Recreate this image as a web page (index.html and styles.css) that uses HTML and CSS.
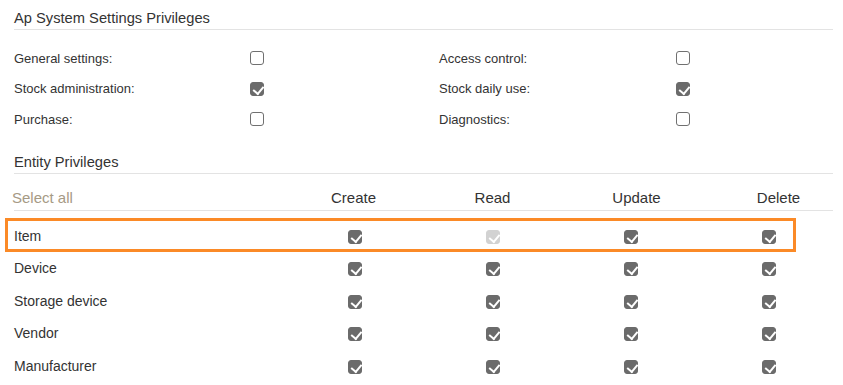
FILE: index.html
```html
<!DOCTYPE html>
<html lang="en">
<head>
    <meta charset="UTF-8">
    <meta name="viewport" content="width=device-width, initial-scale=1.0">
    <title>Privileges</title>
    <link rel="stylesheet" href="styles.css">
</head>
<body>
    <div class="container">
        <h2 class="section-title">Ap System Settings Privileges</h2>

        <div class="settings-grid">
            <span class="setting-label">General settings:</span>
            <span class="cb"></span>
            <span class="setting-label">Access control:</span>
            <span class="cb"></span>

            <span class="setting-label">Stock administration:</span>
            <span class="cb checked"></span>
            <span class="setting-label">Stock daily use:</span>
            <span class="cb checked"></span>

            <span class="setting-label">Purchase:</span>
            <span class="cb"></span>
            <span class="setting-label">Diagnostics:</span>
            <span class="cb"></span>
        </div>

        <h2 class="section-title entity-title">Entity Privileges</h2>

        <div class="entity-header">
            <span class="select-all">Select all</span>
            <span>Create</span>
            <span>Read</span>
            <span>Update</span>
            <span>Delete</span>
        </div>

        <div class="entity-rows">
            <div class="entity-row highlighted">
                <span class="entity-name">Item</span>
                <span class="cell"><span class="cb checked"></span></span>
                <span class="cell"><span class="cb checked disabled"></span></span>
                <span class="cell"><span class="cb checked"></span></span>
                <span class="cell"><span class="cb checked"></span></span>
            </div>
            <div class="entity-row">
                <span class="entity-name">Device</span>
                <span class="cell"><span class="cb checked"></span></span>
                <span class="cell"><span class="cb checked"></span></span>
                <span class="cell"><span class="cb checked"></span></span>
                <span class="cell"><span class="cb checked"></span></span>
            </div>
            <div class="entity-row">
                <span class="entity-name">Storage device</span>
                <span class="cell"><span class="cb checked"></span></span>
                <span class="cell"><span class="cb checked"></span></span>
                <span class="cell"><span class="cb checked"></span></span>
                <span class="cell"><span class="cb checked"></span></span>
            </div>
            <div class="entity-row">
                <span class="entity-name">Vendor</span>
                <span class="cell"><span class="cb checked"></span></span>
                <span class="cell"><span class="cb checked"></span></span>
                <span class="cell"><span class="cb checked"></span></span>
                <span class="cell"><span class="cb checked"></span></span>
            </div>
            <div class="entity-row">
                <span class="entity-name">Manufacturer</span>
                <span class="cell"><span class="cb checked"></span></span>
                <span class="cell"><span class="cb checked"></span></span>
                <span class="cell"><span class="cb checked"></span></span>
                <span class="cell"><span class="cb checked"></span></span>
            </div>
        </div>
    </div>
</body>
</html>
```

FILE: styles.css
```css
:root {
    --text-color: #333333;
    --line-color: #e3e3e3;
    --muted-color: #a69a85;
    --box-color: #6b6b6b;
    --box-disabled: #d2d2d2;
    --highlight: #fb8a27;
}

* {
    margin: 0;
    padding: 0;
    box-sizing: border-box;
}

body {
    font-family: "Liberation Sans", Arial, sans-serif;
    color: var(--text-color);
    background: #ffffff;
    padding: 8px 10px 0 14px;
    overflow: hidden;
}

.container {
    width: 819px;
}

.section-title {
    font-size: 14.7px;
    font-weight: normal;
    line-height: 20px;
    padding-bottom: 1px;
    border-bottom: 1px solid var(--line-color);
}

.entity-title {
    margin-top: 17px;
}

/* top settings block */
.settings-grid {
    display: grid;
    grid-template-columns: 236px 189px 237px 14px;
    grid-auto-rows: 30.5px;
    align-items: center;
    margin-top: 13px;
}

.setting-label {
    font-size: 13px;
}

/* checkbox */
.cb {
    display: inline-block;
    position: relative;
    width: 14px;
    height: 14px;
    border: 1px solid #707070;
    border-radius: 3px;
    background: #ffffff;
}

.cb.checked {
    background: var(--box-color);
    border-color: var(--box-color);
}

.cb.checked.disabled {
    background: var(--box-disabled);
    border-color: var(--box-disabled);
}

.cb.checked::after {
    content: "";
    position: absolute;
    left: 4px;
    top: 1px;
    width: 4.5px;
    height: 8px;
    border: solid #ffffff;
    border-width: 0 2.5px 2.5px 0;
    transform: rotate(40deg);
}

/* entity table */
.entity-header {
    display: grid;
    grid-template-columns: 271px 137px 141px 147px 137px;
    margin-top: 14px;
    font-size: 15px;
    line-height: 20px;
    padding-bottom: 2px;
    border-bottom: 1px solid var(--line-color);
    width: 819px;
}

.entity-header span {
    text-align: center;
    white-space: nowrap;
}

.entity-header .select-all {
    text-align: left;
    color: var(--muted-color);
    margin-left: -2px;
}

.entity-rows {
    margin-top: 10px;
}

.entity-row {
    display: grid;
    grid-template-columns: 271px 139px 138px 138px 138px;
    height: 32.5px;
    align-items: center;
    position: relative;
}

.entity-name {
    font-size: 14px;
    margin-top: -2px;
}

.cell {
    display: flex;
    justify-content: center;
}

.entity-row.highlighted::after {
    content: "";
    position: absolute;
    left: -9px;
    right: 37px;
    top: -3px;
    bottom: 1.5px;
    border: 3px solid var(--highlight);
    pointer-events: none;
}
```
